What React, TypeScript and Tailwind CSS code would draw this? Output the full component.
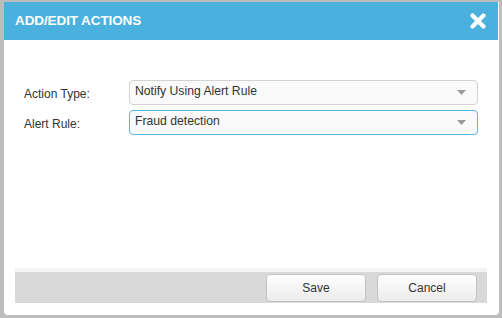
import React from 'react';

const Caret: React.FC = () => (
  <svg width="9" height="5" viewBox="0 0 9 5" className="shrink-0">
    <path d="M0 0 H9 L4.5 5 Z" fill="#9a9a9a" />
  </svg>
);

const SelectBox: React.FC<{ value: string; focused?: boolean }> = ({ value, focused }) => (
  <div
    className={`flex items-center justify-between h-[25px] w-[349px] pl-[5px] pr-[11px] rounded-[4px] bg-[#fafafa] border ${
      focused ? 'border-[#5ab6e2]' : 'border-[#d3d3d3]'
    }`}
  >
    <span className="text-[12.2px] text-[#333] leading-none -mt-[2px]">{value}</span>
    <Caret />
  </div>
);

const FormRow: React.FC<{ label: string; value: string; focused?: boolean }> = ({ label, value, focused }) => (
  <div className="flex items-center">
    <label className="w-[105px] text-[12px] text-[#333] leading-none mt-[3px]">{label}</label>
    <SelectBox value={value} focused={focused} />
  </div>
);

const Button: React.FC<{ children: React.ReactNode }> = ({ children }) => (
  <button className="w-[100px] h-[28px] rounded-[4px] border border-[#c2c2c2] bg-gradient-to-b from-white to-[#ebebeb] text-[12px] text-[#333]">
    {children}
  </button>
);

export default function App() {
  return (
    <div
      className="w-[502px] h-[318px] bg-[#bdbdbd] pl-[4px] pt-[2px] pr-[3px] pb-[3px]"
      style={{ fontFamily: '"Liberation Sans", Arial, sans-serif' }}
    >
      <div className="h-full flex flex-col bg-white rounded-b-[4px]">
        {/* Header */}
        <div className="h-[38px] mr-[1px] bg-[#4ab1de] flex items-center justify-between pl-[11px] pr-[12px]">
          <h2 className="text-[13.5px] font-bold text-white tracking-[-0.1px]">ADD/EDIT ACTIONS</h2>
          <svg width="16" height="16" viewBox="0 0 16 16">
            <path d="M2.5 2.5 L13.5 13.5 M13.5 2.5 L2.5 13.5" stroke="white" strokeWidth="4.2" strokeLinecap="round" />
          </svg>
        </div>

        {/* Body */}
        <div className="flex-1 pt-[40px] pl-[20px] flex flex-col gap-[5px]">
          <FormRow label="Action Type:" value="Notify Using Alert Rule" />
          <FormRow label="Alert Rule:" value="Fraud detection" focused />
        </div>

        {/* Footer */}
        <div className="ml-[11px] mr-[12px] mb-[12px] border-t-[4px] border-[#f4f4f4] bg-[#d9d9d9] h-[35px] pt-[2px] pr-[10px] flex justify-end gap-[11px]">
          <Button>Save</Button>
          <Button>Cancel</Button>
        </div>
      </div>
    </div>
  );
}
